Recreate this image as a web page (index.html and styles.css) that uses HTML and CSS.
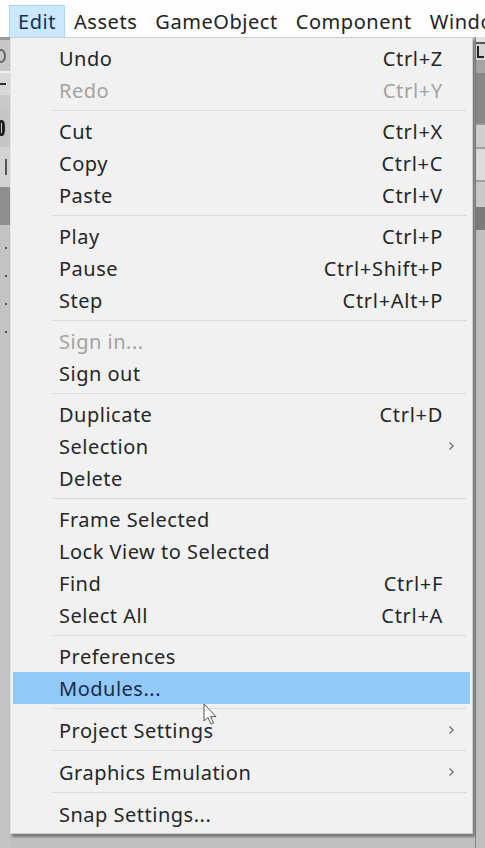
FILE: index.html
```html
<!DOCTYPE html>
<html>
<head>
<meta charset="utf-8">
<link rel="stylesheet" href="styles.css">
</head>
<body>
<div class="menubar">
  <span class="mb-stub"></span>
  <span class="mb-item active">Edit</span>
  <span class="mb-item">Assets</span>
  <span class="mb-item">GameObject</span>
  <span class="mb-item">Component</span>
  <span class="mb-item">Window</span>
</div>
<div class="workspace">
  <div class="side-left">
    <div class="sl a"><i class="mark ring"></i></div>
    <div class="sl b"><i class="mark hbar"></i></div>
    <div class="sl c"></div>
    <div class="sl d"><i class="mark zero"></i></div>
    <div class="sl e"><i class="mark vline"></i></div>
    <div class="sl f"></div>
    <div class="sl g"><i class="dot"></i><i class="dot"></i><i class="dot"></i><i class="dot"></i></div>
  </div>
  <div class="dropdown">
    <div class="mi"><span class="lbl">Undo</span><span class="sc">Ctrl+Z</span></div>
    <div class="mi disabled"><span class="lbl">Redo</span><span class="sc">Ctrl+Y</span></div>
    <div class="sep"></div>
    <div class="mi"><span class="lbl">Cut</span><span class="sc">Ctrl+X</span></div>
    <div class="mi"><span class="lbl">Copy</span><span class="sc">Ctrl+C</span></div>
    <div class="mi"><span class="lbl">Paste</span><span class="sc">Ctrl+V</span></div>
    <div class="sep"></div>
    <div class="mi"><span class="lbl">Play</span><span class="sc">Ctrl+P</span></div>
    <div class="mi"><span class="lbl">Pause</span><span class="sc">Ctrl+Shift+P</span></div>
    <div class="mi"><span class="lbl">Step</span><span class="sc">Ctrl+Alt+P</span></div>
    <div class="sep"></div>
    <div class="mi disabled"><span class="lbl">Sign in...</span></div>
    <div class="mi"><span class="lbl">Sign out</span></div>
    <div class="sep"></div>
    <div class="mi"><span class="lbl">Duplicate</span><span class="sc">Ctrl+D</span></div>
    <div class="mi"><span class="lbl">Selection</span><svg class="chev" width="7" height="10" viewBox="0 0 7 10"><path d="M1.5 1.5 L5.2 5 L1.5 8.5" fill="none" stroke="#6a6a6a" stroke-width="1.2"/></svg></div>
    <div class="mi"><span class="lbl">Delete</span></div>
    <div class="sep"></div>
    <div class="mi"><span class="lbl">Frame Selected</span></div>
    <div class="mi"><span class="lbl">Lock View to Selected</span></div>
    <div class="mi"><span class="lbl">Find</span><span class="sc">Ctrl+F</span></div>
    <div class="mi"><span class="lbl">Select All</span><span class="sc">Ctrl+A</span></div>
    <div class="sep"></div>
    <div class="mi"><span class="lbl">Preferences</span></div>
    <div class="mi hover"><span class="lbl">Modules...</span></div>
    <div class="sep s2"></div>
    <div class="mi"><span class="lbl">Project Settings</span><svg class="chev" width="7" height="10" viewBox="0 0 7 10"><path d="M1.5 1.5 L5.2 5 L1.5 8.5" fill="none" stroke="#6a6a6a" stroke-width="1.2"/></svg></div>
    <div class="sep s2"></div>
    <div class="mi"><span class="lbl">Graphics Emulation</span><svg class="chev" width="7" height="10" viewBox="0 0 7 10"><path d="M1.5 1.5 L5.2 5 L1.5 8.5" fill="none" stroke="#6a6a6a" stroke-width="1.2"/></svg></div>
    <div class="sep s2"></div>
    <div class="mi"><span class="lbl">Snap Settings...</span></div>
    <svg class="cursor" width="16" height="24" viewBox="0 0 16 24"><path d="M1 1 L1 18 L5 14.5 L8 21 L10.5 20 L7.6 13.6 L13 13.6 Z" fill="#ffffff" stroke="#555" stroke-width="1" stroke-linejoin="round"/></svg>
  </div>
  <div class="side-right">
    <div class="sr a"></div>
    <div class="sr b"><i class="mark ell"></i></div>
    <div class="sr c"></div>
    <div class="sr d"></div>
    <div class="sr e"></div>
    <div class="sr f"></div>
    <div class="sr g"></div>
    <div class="sr h"></div>
    <div class="sr i"></div>
  </div>
</div>
</body>
</html>
```
FILE: styles.css
```css
* { box-sizing: border-box; }
html, body { margin: 0; padding: 0; }
body {
  width: 485px;
  height: 848px;
  overflow: hidden;
  background: #c0c0c0;
  font-family: "Noto Sans", "Open Sans", sans-serif;
  color: #262626;
}
.menubar {
  height: 37px;
  width: 485px;
  overflow: hidden;
  background: #fdfdfd;
  display: flex;
  align-items: flex-end;
  font-size: 20px;
  letter-spacing: 0.55px;
  white-space: nowrap;
}
.mb-stub { width: 9px; flex: none; }
.mb-item {
  flex: none;
  height: 32px;
  line-height: 32px;
  padding: 0 8px;
  border: 1px solid transparent;
  border-bottom: none;
  color: #222;
}
.mb-item.active {
  background: #cce8ff;
  border-color: #a8d6fb;
  color: #1d2f4d;
}
.workspace {
  display: flex;
  align-items: flex-start;
  height: 811px;
}
.side-left {
  width: 10px;
  flex: none;
  align-self: stretch;
  display: flex;
  flex-direction: column;
  background: #c2c2c2;
  overflow: hidden;
}
.sl { position: relative; overflow: hidden; display: flex; align-items: center; }
.sl.a { height: 34px; background: #c7c7c7; border-top: 3px solid #9a9a9a; }
.sl.b { height: 24px; background: #d8d8d8; border-top: 2px solid #f0f0f0; }
.sl.c { height: 14px; background: #c9c9c9; }
.sl.d { height: 38px; background: #c5c5c5; }
.sl.e { height: 40px; background: #d2d2d2; }
.sl.f { height: 38px; background: #8f8f8f; }
.sl.g { flex: 1; background: #c3c3c3; flex-direction: column; align-items: flex-end; gap: 26px; padding-top: 22px; padding-right: 3px; }
.mark { display: block; flex: none; }
.mark.ring { width: 10px; height: 14px; margin-left: -4px; border: 2px solid #666; border-radius: 50%; }
.mark.hbar { width: 6px; height: 2px; background: #333; }
.mark.zero { width: 7px; height: 16px; margin-left: -2px; border: 3px solid #222; border-radius: 40%; }
.mark.vline { width: 2px; height: 16px; margin-left: 5px; background: #555; }
.dot { display: block; width: 2px; height: 2px; background: #555; }

.dropdown {
  position: relative;
  width: 463px;
  flex: none;
  background: #f1f1f1;
  border: 1px solid #cfcfcf;
  border-left-color: #e4e4e4;
  box-shadow: 2px 3px 2px rgba(60,60,60,0.55);
  padding: 4px 2px 3px 2px;
  font-size: 20px;
  letter-spacing: 0.5px;
}
.mi {
  height: 32px;
  display: flex;
  align-items: center;
  padding-left: 46px;
  padding-right: 27px;
  white-space: nowrap;
  color: #262626;
}
.mi .lbl { flex: 1; }
.mi .sc { text-align: right; letter-spacing: 0.7px; }
.mi.disabled { color: #a3a3a3; }
.mi.hover { background: #91c9f7; color: #1b2a4a; }
.chev { margin-right: -12px; }
.sep {
  height: 1px;
  background: #d9d9d9;
  margin: 4px 4px 4px 40px;
}
.sep.s2 { margin-bottom: 5px; }
.cursor {
  position: absolute;
  left: 192px;
  top: 665px;
}
.side-right {
  flex: 1;
  align-self: stretch;
  display: flex;
  flex-direction: column;
  background: #bdbdbd;
  border-left: 1px solid #888;
  margin-left: 2px;
  overflow: hidden;
}
.sr { flex: none; overflow: hidden; }
.sr.a { height: 5px; background: #e2e2e2; }
.sr.b { height: 18px; background: #d6d6d6; border-top: 2px solid #555; padding: 2px 0 0 1px; }
.mark.ell { width: 7px; height: 12px; border-left: 2px solid #222; border-bottom: 2px solid #222; }
.sr.c { height: 13px; background: #a5a5a5; }
.sr.d { height: 50px; background: #888888; }
.sr.e { height: 24px; background: #cfcfcf; border-top: 2px solid #9a9a9a; }
.sr.f { height: 33px; background: #dcdcdc; border-top: 2px solid #a0a0a0; }
.sr.g { height: 27px; background: #c9c9c9; border-top: 2px solid #a0a0a0; }
.sr.h { height: 23px; background: #7b7b7b; }
.sr.i { flex: 1; background: #c0c0c0; }
```
